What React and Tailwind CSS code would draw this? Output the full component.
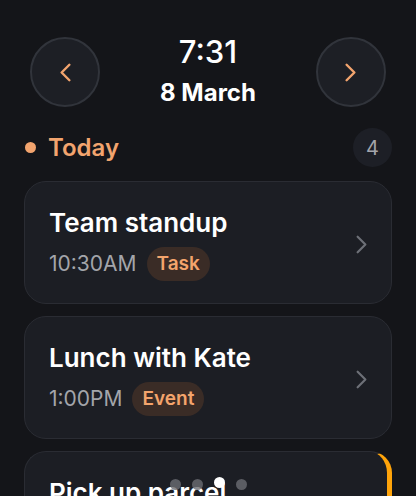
import { ChevronLeft, ChevronRight } from 'lucide-react'

const ITEMS = [
  { title: 'Team standup', time: '10:30AM', tag: 'Task' },
  { title: 'Lunch with Kate', time: '1:00PM', tag: 'Event' },
  { title: 'Pick up parcel', time: '5:00PM', tag: 'Task', accent: true },
]

function NavButton({ dir }) {
  const Icon = dir === 'left' ? ChevronLeft : ChevronRight
  return (
    <button className="w-[70px] h-[70px] rounded-full bg-[#1d1f25] border-2 border-[#31343b] flex items-center justify-center text-[#f2a46e]">
      <Icon size={31} strokeWidth={1.9} />
    </button>
  )
}

function Card({ item }) {
  return (
    <div
      className={`rounded-[22px] bg-[#1c1e24] border border-[#2a2c33] px-6 pt-[26px] pb-[22px] flex items-center ${item.accent ? 'border-r-[5px] border-r-[#ffa40a]' : ''}`}
    >
      <div className="flex-1 flex flex-col gap-[9px]">
        <div className="text-[26px] leading-[30px] font-semibold text-white">{item.title}</div>
        <div className="flex items-center gap-[10px] h-[34px]">
          <span className="text-[21px] text-[#a3a5aa]">{item.time}</span>
          <span className="h-[34px] px-[10px] rounded-full bg-[#3a2c26] text-[#f4a46c] text-[19px] font-semibold flex items-center">
            {item.tag}
          </span>
        </div>
      </div>
      <ChevronRight size={31} strokeWidth={1.7} className="text-[#6d7077] -mr-[10px]" />
    </div>
  )
}

export default function App() {
  return (
    <div
      className="relative w-[416px] h-[496px] overflow-hidden bg-[#141519]"
      style={{ fontFamily: 'Inter, "Noto Sans", sans-serif' }}
    >
      {/* header */}
      <div className="flex items-center justify-between px-[30px] pt-[36px]">
        <NavButton dir="left" />
        <div className="flex flex-col items-center -mt-[2px]">
          <div className="text-[31px] leading-[36px] font-medium text-white">7:31</div>
          <div className="text-[24px] leading-[30px] font-bold text-white mt-[8px]">8 March</div>
        </div>
        <NavButton dir="right" />
      </div>

      {/* section heading */}
      <div className="flex items-center justify-between pl-[25px] pr-[24px] mt-[20px]">
        <div className="flex items-center gap-[12px]">
          <span className="w-[11px] h-[11px] rounded-full bg-[#f2a46e]" />
          <span className="text-[24px] leading-[30px] font-semibold text-[#f2a46e]">Today</span>
        </div>
        <span className="w-[39px] h-[39px] rounded-full bg-[#1d1f26] text-[#a3a5ab] text-[20px] flex items-center justify-center">
          4
        </span>
      </div>

      {/* list */}
      <div className="flex flex-col gap-[12px] px-6 mt-[14px]">
        {ITEMS.map(item => <Card key={item.title} item={item} />)}
      </div>

      {/* page dots */}
      <div className="absolute left-0 right-0 bottom-[6px] flex justify-center items-center gap-[11px]">
        <span className="w-[11px] h-[11px] rounded-full bg-[#6b6d73]/80" />
        <span className="w-[11px] h-[11px] rounded-full bg-[#6b6d73]/80" />
        <span className="w-[11px] h-[11px] rounded-full bg-white -mt-[4px]" />
        <span className="w-[11px] h-[11px] rounded-full bg-[#6b6d73]/80" />
      </div>
    </div>
  )
}
